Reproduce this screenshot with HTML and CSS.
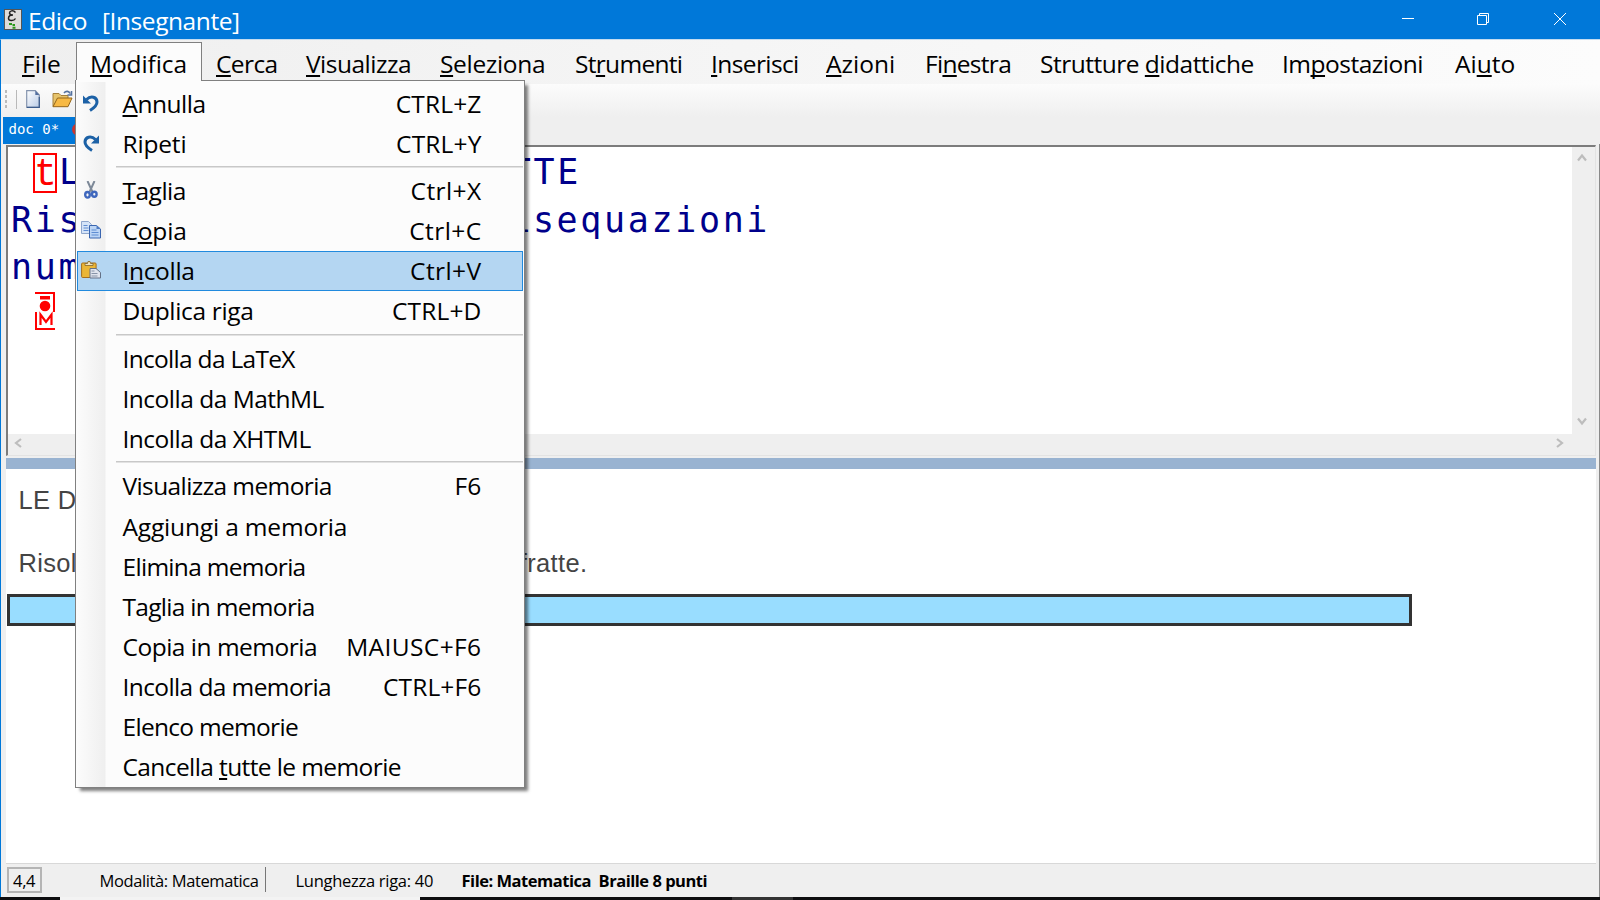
FILE: index.html
```html
<!DOCTYPE html>
<html lang="it">
<head>
<meta charset="utf-8">
<title>Edico [Insegnante]</title>
<link rel="stylesheet" href="styles.css">
</head>
<body>
<div class="window">
  <header class="titlebar">
    <svg class="app-icon" width="18" height="21" viewBox="0 0 18 21"><rect width="18" height="21" fill="#555"/><rect x="1" y="1" width="16" height="19" fill="#dedcda"/><path d="M11.500 3.500C9 .5 5.500 2 5.500 4c0 1.500 1.500 2 3.500 2C6 6 4.500 7.500 4.500 9.200c0 3 5.500 3 7 .3" fill="none" stroke="#222" stroke-width="1.500"/><path d="M5 15h3M8.500 16h2.500M8.500 18.800h3" stroke="#2a9a1c" stroke-width="2"/></svg>
    <h1 class="title">Edico&nbsp; [Insegnante]</h1>
    <div class="controls">
      <svg width="14" height="14" viewBox="0 0 14 14"><path d="M1 6.500h12"/></svg>
      <svg width="14" height="14" viewBox="0 0 14 14"><path d="M.5 3.500h9v9h-9zM2.500 3.500v-2h9v9h-2"/></svg>
      <svg width="14" height="14" viewBox="0 0 14 14"><path d="M1 1l12 12M13 1L1 13"/></svg>
    </div>
  </header>

  <nav class="menubar">
    <span><u>F</u>ile</span>
    <span class="open"><u>M</u>odifica</span>
    <span class="tight"><u>C</u>erca</span>
    <span class="mid"><u>V</u>isualizza</span>
    <span class="snug"><u>S</u>eleziona</span>
    <span class="tighter">St<u>r</u>umenti</span>
    <span class="tight"><u>I</u>nserisci</span>
    <span><u>A</u>zioni</span>
    <span class="tighter">Fi<u>n</u>estra</span>
    <span class="mid">Strutture <u>d</u>idattiche</span>
    <span class="mid">Im<u>p</u>ostazioni</span>
    <span>Ai<u>u</u>to</span>
  </nav>

  <div class="toolbar">
    <i class="grip"></i><i class="bar"></i>
    <svg class="new" width="14" height="18" viewBox="0 0 14 18"><defs><linearGradient id="pg" x2="1" y2="1"><stop offset="0" stop-color="#fff"/><stop offset="1" stop-color="#b9cbe6"/></linearGradient></defs><path d="M.7 .7h8.600l4 4.300v12.300H.7z" fill="url(#pg)" stroke="#8493ad" stroke-width="1.200"/><path d="M9.300 .7V5h4z" fill="#526e9e"/><path d="M1 17.300h12.300V7" fill="none" stroke="#3c5c8c" stroke-width="1.200"/></svg>
    <svg width="22" height="18" viewBox="0 0 22 18"><path d="M1 16.500V3.500h6l2 2h7v4" fill="#e6c36b" stroke="#a6803a"/><path d="M1 16.700L5.500 8H20l-4 8.700z" fill="#f7b944" stroke="#94661a"/><path d="M12 3c2-2.500 5-2 6 .5M19.500 1v4h-4" fill="none" stroke="#5673a0" stroke-width="1.600"/></svg>
  </div>
  <div class="tabs"><div class="tab">doc 0*<i class="dot"></i></div></div>

  <main class="work">
    <section class="editor">
      <div class="code">
        <div class="row first"><span class="mark">t</span>LE DISEQUAZIONI FRATTE</div>
        <div class="row">Risolvi le seguenti disequazioni</div>
        <div class="row">numeriche fratte.</div>
        <div class="row last"><svg width="20" height="38" viewBox="0 0 20 38"><g fill="none" stroke="red" stroke-width="2"><path d="M0 1h19v19M1 20v17h19"/><path d="M5.500 33V22.500l5.500 7.500 5.500-7.500V33" stroke-width="2.200"/></g><path d="M5 4h10v3.500H5z" fill="red"/><circle cx="10" cy="14" r="5.300" fill="red"/></svg></div>
      </div>
      <div class="vscroll">
        <svg width="10" height="9" viewBox="0 0 10 9"><path d="M1 7.500l4-5 4 5"/></svg>
        <svg width="10" height="9" viewBox="0 0 10 9"><path d="M1 1.500l4 5 4-5"/></svg>
      </div>
      <div class="hscroll">
        <svg width="9" height="10" viewBox="0 0 9 10"><path d="M7 1L2 5l5 4"/></svg>
        <svg width="9" height="10" viewBox="0 0 9 10"><path d="M2 1l5 4-5 4"/></svg>
      </div>
    </section>
    <div class="splitter"></div>
    <section class="preview">
      <p>LE DISEQUAZIONI FRATTE</p>
      <p>Risolvi le seguenti disequazioni numeriche fratte.</p>
      <div class="current-line"></div>
    </section>
  </main>

  <footer class="status">
    <span class="pos">4,4</span>
    <span class="mode">Modalità: Matematica</span>
    <span class="len">Lunghezza riga: 40</span>
    <b>File: Matematica&nbsp; Braille 8 punti</b>
  </footer>
  <div class="taskbar"><i class="t1"></i><i class="t2"></i></div>

  <div class="dropdown">
    <div class="item"><svg width="16" height="18" viewBox="0 0 16 18"><path d="M3.500 5.500C8 1 14 3 14 8c0 3-3 6-7 8.500" fill="none" stroke="#1c61a6" stroke-width="3"/><path d="M0 1.500v8h8z" fill="#1c61a6"/></svg><span class="mid"><u>A</u>nnulla</span><kbd>CTRL+Z</kbd></div>
    <div class="item"><svg width="16" height="18" viewBox="0 0 16 18"><path d="M12.500 5.500C8 1 2 3 2 8c0 3 3 6 7 8.500" fill="none" stroke="#1c61a6" stroke-width="3"/><path d="M16 1.500v8H8z" fill="#1c61a6"/></svg><span class="close">Ripeti</span><kbd>CTRL+Y</kbd></div>
    <hr>
    <div class="item"><svg width="16" height="18" viewBox="0 0 16 18"><path d="M4.500 0l5 11M11.500 0l-5 11" stroke="#7d8998" stroke-width="2" fill="none"/><g fill="none" stroke="#3f67bd" stroke-width="2.400"><ellipse cx="4.500" cy="13.800" rx="2.300" ry="2.800"/><ellipse cx="11.300" cy="13.300" rx="2.300" ry="2.500"/></g></svg><span class="mid"><u>T</u>aglia</span><kbd class="wide">Ctrl+X</kbd></div>
    <div class="item"><svg width="20" height="18" viewBox="0 0 20 18"><g fill="#d5e4f8" stroke="#8fa6cc"><path d="M.5 .5h7l3 3v9H.5z"/><path d="M8.500 4.500h7l4 3.500v9h-11z" fill="#bcd5f5" stroke="#3b66b0"/></g><path d="M2.500 4.500h4M2.500 7h5M2.500 9.500h5M10.500 9h5M10.500 11.500h7M10.500 14h7" stroke="#5f8dd2"/><path d="M15.500 4.500V8h4z" fill="#4f7cc4"/></svg><span class="close">C<u>o</u>pia</span><kbd class="wide">Ctrl+C</kbd></div>
    <div class="item active"><svg width="20" height="18" viewBox="0 0 20 18"><rect x=".6" y="2" width="14.500" height="14.500" rx="1" fill="#eab638" stroke="#a66f1d"/><path d="M4 4.500V2.500h2.500L7 .5h2l.6 2H12v2z" fill="#efe3c2" stroke="#846427" stroke-width=".8"/><path d="M9 7.500h6l4.500 4v5.500H9z" fill="#dfe4ed" stroke="#647186"/><path d="M10.500 10h3M10.500 12.500h6M10.500 15h6" stroke="#8793a7"/></svg><span class="snug">I<u>n</u>colla</span><kbd class="wide">Ctrl+V</kbd></div>
    <div class="item"><span class="snug">Duplica riga</span><kbd>CTRL+D</kbd></div>
    <hr>
    <div class="item"><span class="tighter">Incolla da LaTeX</span></div>
    <div class="item"><span class="mid">Incolla da MathML</span></div>
    <div class="item"><span class="mid">Incolla da XHTML</span></div>
    <hr>
    <div class="item"><span class="tight">Visualizza memoria</span><kbd>F6</kbd></div>
    <div class="item"><span class="close">Aggiungi a memoria</span></div>
    <div class="item"><span class="tighter">Elimina memoria</span></div>
    <div class="item"><span class="tighter">Taglia in memoria</span></div>
    <div class="item"><span class="mid">Copia in memoria</span><kbd class="wide">MAIUSC+F6</kbd></div>
    <div class="item"><span class="tight">Incolla da memoria</span><kbd>CTRL+F6</kbd></div>
    <div class="item"><span class="tighter">Elenco memorie</span></div>
    <div class="item"><span class="tight">Cancella <u>t</u>utte le memorie</span></div>
  </div>
</div>
</body>
</html>
```
FILE: styles.css
```css
* { box-sizing: border-box; }
body { margin: 0; overflow: hidden; background: #efefef; font: 24.5px/1 "Open Sans", "Noto Sans", sans-serif; color: #000; }
svg { display: block; flex: none; }
u { text-decoration-thickness: 1.5px; text-underline-offset: 2px; text-decoration-skip-ink: none; }
.window { position: relative; width: 1600px; height: 900px; display: flex; flex-direction: column; }

.close { letter-spacing: -.17px; }
.snug { letter-spacing: -.33px; }
.mid { letter-spacing: -.5px; }
.tight { letter-spacing: -.6px; }
.tighter { letter-spacing: -.7px; }

.titlebar { height: 39px; flex: none; display: flex; align-items: flex-start; padding: 8.500px 0 0 4px; background: #0078d9; color: #fff; }
.title { margin: 0 0 0 6px; font-size: 24.500px; font-weight: 400; line-height: 24px; letter-spacing: -.43px; word-spacing: 1.500px; }
.controls { margin-left: auto; display: flex; gap: 62px; padding: 3.500px 33px 0 0; }
.controls svg { fill: none; stroke: #fff; stroke-width: 1; }

.menubar { height: 45px; flex: none; display: grid; grid-template-columns: 55px 139px 90px 134px 135px 136px 115px 99px 115px 242px 173px 100px; padding-left: 21px; border-top: 1px solid #c4dcf0; border-left: 1px solid #0078d9; background: linear-gradient(90deg, #efefef, #fcfcfc); line-height: 48px; white-space: nowrap; }
.menubar .open { width: 126px; height: 43px; margin: 2px 0 0 -1px; padding-left: 13px; line-height: 42px; letter-spacing: -.1px; background: #fcfcfc; border: 1px solid #808080; border-bottom: 0; }

.toolbar { height: 33px; flex: none; display: flex; align-items: center; border-left: 1px solid #0078d9; padding: 0 0 3px 4px; background: linear-gradient(#fcfcfc, #efefef); }
.grip { width: 2px; height: 18px; background: repeating-linear-gradient(#bbb 0 3px, transparent 3px 5px); }
.bar { width: 1px; height: 19px; margin: 0 9px; background: #b9b9b9; }
.toolbar .new { margin-right: 12px; }
.tabs { height: 27px; flex: none; border-left: 1px solid #0078d9; padding-left: 2px; }
.tab { width: 90px; height: 27px; display: flex; padding: 0 0 3px 5.500px; align-items: center; background: #0078d9; color: #fff; font: 14px/1 "DejaVu Sans Mono", monospace; }
.dot { width: 13px; height: 13px; border-radius: 50%; background: #c9352f; margin-left: 13px; }

.work { height: 720px; flex: none; display: flex; flex-direction: column; border-left: 1px solid #0078d9; border-right: 1px solid #8a8a8a; padding: 1px 3px 0 5px; }
.editor { height: 311px; display: grid; grid-template: 287px 21px / 1564px 23px; border: 2px solid #7c7c7c; border-right: 1px solid #e3e3e3; border-bottom: 1px solid #e3e3e3; background: #efefef; }
.code { background: #fff; padding: 2px 0 0 3px; overflow: hidden; color: #00008b; font: 35px/47px "DejaVu Sans Mono", monospace; letter-spacing: 2.650px; white-space: nowrap; }
.row { height: 47px; }
.row.first { height: 48px; display: flex; padding-left: 22px; }
.mark { width: 24px; height: 40px; margin: 4px 2px 0 0; border: 2px solid #f00; color: #f00; font: 38px/40px "Liberation Mono", monospace; letter-spacing: 0; text-indent: -1px; }
.row.last { padding: 1px 0 0 24px; }
.vscroll { display: flex; flex-direction: column; justify-content: space-between; padding: 6px 0 8px 4.500px; }
.hscroll { display: flex; justify-content: space-between; align-items: center; padding: 0 8px 3px 6px; }
.vscroll svg, .hscroll svg { fill: none; stroke: #bdbdbd; stroke-width: 2.200; }
.splitter { height: 11px; margin: 2px 0 0; flex: none; background: #99b3d1; }
.preview { flex: 1; background: #fff; border-bottom: 1px solid #d8d8d8; padding-top: 18px; font: 25.500px/26px "Liberation Sans", Arial, sans-serif; letter-spacing: .32px; color: #444; }
.preview p { margin: 0 0 37px 12.500px; }
.current-line { width: 1405px; height: 32px; margin: -19px 0 0 1px; background: #99ddff; border: 3px solid #333; }

.status { height: 33px; flex: none; display: flex; align-items: center; border-left: 1px solid #0078d9; border-right: 1px solid #8a8a8a; padding-left: 6px; font-size: 16.500px; white-space: nowrap; }
.pos { width: 35px; height: 26px; margin-top: -2px; border: 2px solid #b5b5b5; line-height: 24px; padding-left: 4px; letter-spacing: -.3px; }
.mode { width: 166px; height: 25px; margin: -2px 0 0 57.500px; line-height: 27px; border-right: 1px solid #777; letter-spacing: -.380px; }
.len { width: 166px; margin: 1px 0 0 30px; letter-spacing: -.280px; }
.status b { margin-top: 1px; letter-spacing: -.480px; }
.taskbar { height: 3px; flex: none; display: flex; background: #0e0e10; }
.t1 { width: 360px; margin-left: 60px; background: #f3f3f3; }
.t2 { width: 61px; margin-left: 312px; background: #333; }

.dropdown { position: absolute; left: 75px; top: 80px; width: 450px; height: 708px; padding: 2px 1px 0; border: 1px solid #808080; background: linear-gradient(90deg, #fcfcfc, #efefef 29px, #fcfcfc 30px); box-shadow: 4px 4px 3px -1px rgba(0,0,0,.5); }
.dropdown::before { content: ""; position: absolute; left: 0; top: -1px; width: 125px; height: 2px; background: #fcfcfc; }
.item { height: 40.060px; display: flex; align-items: center; border: 1px solid transparent; padding: 1px 40.500px 0 44.500px; white-space: nowrap; line-height: 38px; }
.item svg { margin: -2px 0 0 -42px; }
.item svg + span { margin-left: 22px; }
.item svg[width="16"] { margin-left: -40px; }
.item svg[width="16"] + span { margin-left: 24px; }
.item kbd { margin-left: auto; font: inherit; letter-spacing: .15px; }
.item kbd.wide { letter-spacing: .4px; }
.item.active { background: #b4d6f2; border: 1px solid #218ade; }
hr { height: 7.500px; margin: 0 0 0 39px; border: 0; background: linear-gradient(#c8c8c8, #c8c8c8) 0 3px / 100% 1.500px no-repeat; }
```
